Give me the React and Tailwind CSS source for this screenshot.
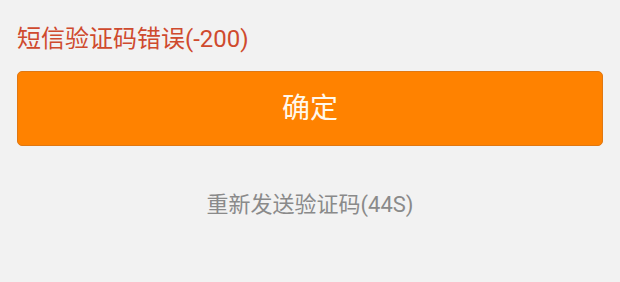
import React from "react";

const App = () => {
  return (
    <div
      className="w-[620px] h-[282px] bg-[#f2f2f2] px-[17px] pt-[24px]"
      style={{ fontFamily: "Roboto, 'Noto Sans CJK SC', sans-serif" }}
    >
      <p className="text-[24px] leading-[30px] text-[#cf4a2e]">
        短信验证码错误(-200)
      </p>
      <button className="mt-[17px] w-full h-[75px] rounded-[5px] bg-[#ff8200] border border-[#e07812] text-[28px] text-[#fff8ec] flex items-center justify-center">
        确定
      </button>
      <p className="mt-[45px] text-center text-[22px] leading-[28px] text-[#8a8a8a]">
        重新发送验证码(44S)
      </p>
    </div>
  );
};

export default App;
